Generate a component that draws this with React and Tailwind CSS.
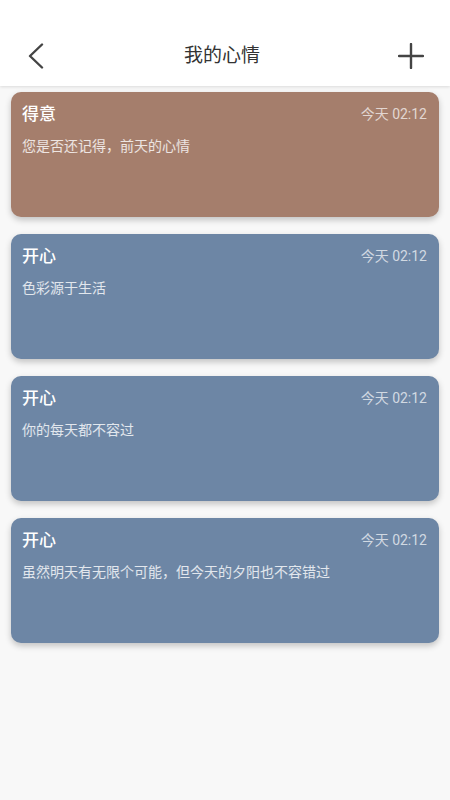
import React from 'react';

const moods = [
  { title: '得意', text: '您是否还记得，前天的心情', time: '今天 02:12', color: 'bg-[#a57e6c]' },
  { title: '开心', text: '色彩源于生活', time: '今天 02:12', color: 'bg-[#6d86a5]' },
  { title: '开心', text: '你的每天都不容过', time: '今天 02:12', color: 'bg-[#6d86a5]' },
  { title: '开心', text: '虽然明天有无限个可能，但今天的夕阳也不容错过', time: '今天 02:12', color: 'bg-[#6d86a5]' },
];

export default function App() {
  return (
    <div
      className="w-[450px] h-[800px] bg-[#f8f8f8] flex flex-col overflow-hidden"
      style={{ fontFamily: "Roboto, 'Noto Sans CJK SC', sans-serif" }}
    >
      {/* Header */}
      <div className="h-[86px] bg-white flex items-end shadow-[0_1px_3px_rgba(0,0,0,0.12)] relative z-10">
        <div className="h-[58px] w-full flex items-center justify-between px-[26px] pb-[3px]">
          <svg width="20" height="26" viewBox="0 0 20 26" fill="none">
            <path d="M16 1.5 L4 13 L16 24.5" stroke="#444" strokeWidth="2.4" strokeLinecap="round" strokeLinejoin="round" />
          </svg>
          <span className="text-[19px] text-[#333] leading-none">我的心情</span>
          <svg width="26" height="26" viewBox="0 0 26 26" fill="none">
            <path d="M13 1 V25 M1 13 H25" stroke="#444" strokeWidth="2.4" strokeLinecap="round" />
          </svg>
        </div>
      </div>

      {/* List */}
      <div className="flex flex-col gap-[17px] px-[11px] pt-[6px]">
        {moods.map((m, i) => (
          <div
            key={i}
            className={`${m.color} h-[125px] rounded-[10px] shadow-[0_3px_6px_rgba(0,0,0,0.22)] pl-[11px] pr-[12px] pt-[10px]`}
          >
            <div className="flex items-center justify-between h-[24px]">
              <span className="text-[17px] font-medium text-white leading-none">{m.title}</span>
              <span className="text-[14px] text-white/70 leading-none">{m.time}</span>
            </div>
            <div className="mt-[13px] text-[14px] text-white/80 leading-none">{m.text}</div>
          </div>
        ))}
      </div>
    </div>
  );
}
